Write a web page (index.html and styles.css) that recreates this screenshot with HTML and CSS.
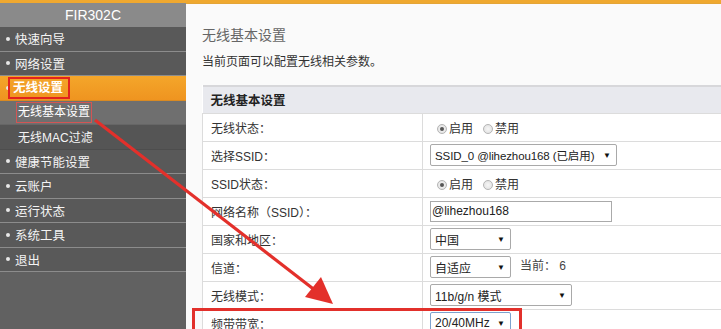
FILE: index.html
```html
<!DOCTYPE html>
<html lang="zh-CN">
<head>
<meta charset="utf-8">
<title>FIR302C 无线基本设置</title>
<link rel="stylesheet" href="styles.css">
</head>
<body>
<div class="page">
  <div class="topbar"></div>
  <div class="main">
    <aside class="sidebar">
      <div class="brand">FIR302C</div>
      <div class="item"><span class="dot"></span>快速向导</div>
      <div class="item"><span class="dot"></span>网络设置</div>
      <div class="item active"><span class="dot"></span><span class="mark-strong">无线设置</span></div>
      <div class="item sub selected"><span class="mark-thin">无线基本设置</span></div>
      <div class="item sub">无线MAC过滤</div>
      <div class="item"><span class="dot"></span>健康节能设置</div>
      <div class="item"><span class="dot"></span>云账户</div>
      <div class="item"><span class="dot"></span>运行状态</div>
      <div class="item"><span class="dot"></span>系统工具</div>
      <div class="item"><span class="dot"></span>退出</div>
    </aside>
    <section class="content">
      <h1 class="title">无线基本设置</h1>
      <p class="desc">当前页面可以配置无线相关参数。</p>
      <table class="form">
        <tr class="head"><th colspan="2">无线基本设置</th></tr>
        <tr>
          <td class="label">无线状态：</td>
          <td class="value"><span class="radio on"></span><span class="rtext">启用</span><span class="radio"></span><span class="rtext">禁用</span></td>
        </tr>
        <tr>
          <td class="label">选择SSID：</td>
          <td class="value"><span class="sel w-ssid"><span class="opt">SSID_0 @lihezhou168 (已启用)</span><span class="arr">▼</span></span></td>
        </tr>
        <tr>
          <td class="label">SSID状态：</td>
          <td class="value"><span class="radio on"></span><span class="rtext">启用</span><span class="radio"></span><span class="rtext">禁用</span></td>
        </tr>
        <tr>
          <td class="label">网络名称（SSID）：</td>
          <td class="value"><span class="input">@lihezhou168</span></td>
        </tr>
        <tr>
          <td class="label">国家和地区：</td>
          <td class="value"><span class="sel w-short"><span class="opt">中国</span><span class="arr">▼</span></span></td>
        </tr>
        <tr>
          <td class="label">信道：</td>
          <td class="value"><span class="sel w-short"><span class="opt">自适应</span><span class="arr">▼</span></span><span class="chan-now">当前： 6</span></td>
        </tr>
        <tr>
          <td class="label">无线模式：</td>
          <td class="value"><span class="sel w-mode"><span class="opt">11b/g/n 模式</span><span class="arr">▼</span></span></td>
        </tr>
        <tr>
          <td class="label">频带带宽：</td>
          <td class="value"><span class="sel w-short focus"><span class="opt">20/40MHz</span><span class="arr">▼</span></span></td>
        </tr>
      </table>
    </section>
  </div>
  <div class="highlight"></div>
  <svg class="arrow" width="721" height="329" viewBox="0 0 721 329">
    <line x1="95" y1="120" x2="316" y2="291" stroke="#e3302b" stroke-width="3.2"/>
    <polygon points="333,304 305,297 321,277" fill="#e3302b"/>
  </svg>
</div>
</body>
</html>
```

FILE: styles.css
```css
* { box-sizing: border-box; }
html, body { margin: 0; padding: 0; }
body {
  width: 721px;
  height: 329px;
  overflow: hidden;
  background: #fafafa;
  font-family: "Liberation Sans", "Noto Sans CJK SC", sans-serif;
  font-size: 12px;
  color: #333;
}
.page { position: relative; width: 721px; height: 329px; overflow: hidden; }
.topbar {
  height: 4px;
  background: #efa82f;
  border-bottom: 1px solid #e3a537;
}
.main { display: flex; height: 325px; }
.sidebar {
  width: 186px;
  flex: none;
  background: #616161;
  color: #f4f4f4;
}
.brand {
  height: 24px;
  line-height: 24px;
  background: #8a8a8a;
  text-align: center;
  font-size: 14px;
  color: #fff;
  margin-top: -1px;
}
.item {
  height: 24.5px;
  font-size: 12.5px;
  padding-left: 6px;
  background: #595959;
  border-bottom: 1px solid #8c8c8c;
  display: flex;
  align-items: center;
  white-space: nowrap;
}
.dot {
  width: 4px;
  height: 4px;
  border-radius: 50%;
  background: #e8e8e8;
  margin-right: 5px;
  flex: none;
}
.item.active {
  background: linear-gradient(#f4a62a, #ef9420);
  border-bottom: 1px solid #d98a22;
  color: #fff;
  font-weight: bold;
}
.item.sub {
  padding-left: 18px;
  font-size: 12px;
  background: #555;
  border-bottom: 1px solid #4d4d4d;
}
.item.selected {
  padding-left: 16px;
  background: #6f6f6f;
  border-bottom: 1px solid #666;
}
.mark-strong {
  display: inline-block;
  border: 2px solid #e2231d;
  line-height: 18px;
  padding: 0 5px 0 3px;
  margin-left: -7px;
}
.mark-thin {
  display: inline-block;
  border: 1px solid #d25555;
  line-height: 19px;
  padding: 0 1px;
  color: #fff;
}
.content {
  flex: 1;
  padding: 20px 0 0 16px;
  background: #fafafa;
  border-top: 1px solid #fdf8f8;
}
.title {
  margin: 0;
  font-size: 14px;
  font-weight: normal;
  color: #666;
  line-height: 20px;
}
.desc {
  margin: 8px 0 0;
  line-height: 18px;
  font-size: 12px;
  color: #333;
}
.form {
  margin-top: 14px;
  width: 560px;
  border-collapse: collapse;
  background: #fff;
}
.form th {
  height: 27px;
  text-align: left;
  padding: 0 0 0 8px;
  background: #e8e9ee;
  border-top: 2px solid #d7d7da;
  font-size: 12.5px;
  font-weight: bold;
  color: #222;
}
.form td {
  height: 28px;
  border: 1px solid #dcdcdc;
  padding: 0;
  vertical-align: middle;
  white-space: nowrap;
}
.form .label { width: 220px; padding-left: 8px; color: #333; }
.form .value { padding-left: 7px; }
.radio {
  display: inline-block;
  width: 10px;
  height: 10px;
  border-radius: 50%;
  border: 1px solid #b5b5b5;
  background: radial-gradient(#f6f6f6, #dedede);
  vertical-align: -1px;
  margin-left: 7px;
  position: relative;
}
.radio.on::after {
  content: "";
  position: absolute;
  left: 2px;
  top: 2px;
  width: 4px;
  height: 4px;
  border-radius: 50%;
  background: #555;
}
.rtext { margin-left: 2px; margin-right: 3px; }
.sel {
  display: inline-flex;
  justify-content: space-between;
  align-items: center;
  height: 22px;
  border: 1px solid #a9a9a9;
  border-radius: 2px;
  background: #fff;
  padding: 0 5px 0 4px;
  vertical-align: middle;
  color: #222;
  white-space: nowrap;
}
.opt { white-space: nowrap; }
.arr { font-size: 8px; color: #111; flex: none; }
.w-ssid { width: 187px; }
.w-ssid .opt { font-size: 11.5px; letter-spacing: -0.1px; }
.w-short { width: 81px; }
.w-mode { width: 142px; }
.sel.focus { border-color: #7da2ce; }
.input {
  display: inline-block;
  width: 182px;
  height: 21px;
  line-height: 19px;
  border: 1px solid #aaa;
  padding-left: 1px;
  background: #fff;
  vertical-align: middle;
  color: #222;
}
.chan-now { margin-left: 9px; color: #444; }
.highlight {
  position: absolute;
  left: 192px;
  top: 308px;
  width: 330px;
  height: 40px;
  border: 3px solid #e2302b;
}
.arrow { position: absolute; left: 0; top: 0; pointer-events: none; }
```
